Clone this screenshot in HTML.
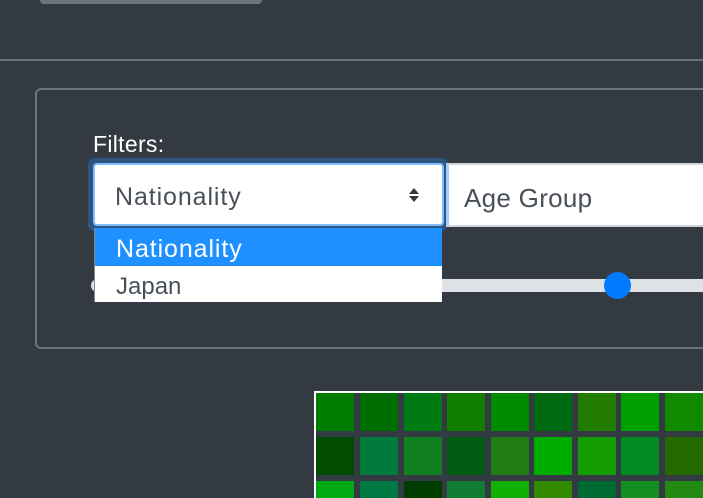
<!DOCTYPE html>
<html><head><style>
*{margin:0;padding:0;box-sizing:border-box}
html,body{width:703px;height:498px;overflow:hidden}
body{background:#343a41;position:relative;font-family:"Liberation Sans","DejaVu Sans",sans-serif}
.a{position:absolute}
.c{position:absolute;width:38px;height:38px}
</style></head><body>
<div class="a" style="left:40px;top:-6px;width:222px;height:10px;background:#6c757d;border-radius:4px"></div>
<div class="a" style="left:0;top:59px;width:703px;height:2px;background:#6e747b"></div>
<div class="a" style="left:35px;top:88px;width:700px;height:261px;border:2px solid #6e747b;border-radius:6px"></div>
<div class="a" style="left:93px;top:131px;color:#fff;font-size:23px;letter-spacing:0.3px">Filters:</div>
<div class="a" style="left:88px;top:158px;width:360px;height:73px;background:#2d5580;border-radius:6px"></div>
<div class="a" style="left:93px;top:163px;width:351px;height:63px;background:#fff;border:2px solid #80bdff;border-radius:4px"></div>
<div class="a" style="left:115px;top:183px;color:#495057;font-size:25px;letter-spacing:0.9px">Nationality</div>
<svg class="a" style="left:408px;top:187px" width="12" height="16" viewBox="0 0 12 16"><path d="M1 7 L6 1 L11 7Z M1 9 L6 15 L11 9Z" fill="#343a40"/></svg>
<div class="a" style="left:446px;top:163px;width:270px;height:64px;background:#fff;border:2px solid #ced4da;border-left:3px solid #a8cef7"></div>
<div class="a" style="left:464px;top:183px;color:#495057;font-size:26px;letter-spacing:0.3px">Age Group</div>
<div class="a" style="left:91px;top:279px;width:620px;height:13px;background:#dee2e6;border-radius:7px"></div>
<div class="a" style="left:604px;top:272px;width:27px;height:27px;background:#007bff;border-radius:50%"></div>
<div class="a" style="left:94px;top:228px;width:348px;height:74px;background:#fff;border-left:1px solid #888"></div>
<div class="a" style="left:95px;top:228px;width:347px;height:38px;background:#1e90ff"></div>
<div class="a" style="left:116px;top:235px;color:#fff;font-size:25px;letter-spacing:0.9px">Nationality</div>
<div class="a" style="left:116px;top:273px;color:#495057;font-size:24px">Japan</div>
<div class="a" style="left:314px;top:391px;width:389px;height:107px;background:#343a41;border-left:2px solid #fff;border-top:2px solid #fff"></div>
<div class="c" style="left:316px;top:393px;background:#007c00"></div>
<div class="c" style="left:360px;top:393px;background:#006d00"></div>
<div class="c" style="left:404px;top:393px;background:#007a12"></div>
<div class="c" style="left:447px;top:393px;background:#117e00"></div>
<div class="c" style="left:491px;top:393px;background:#008a00"></div>
<div class="c" style="left:534px;top:393px;background:#006a12"></div>
<div class="c" style="left:578px;top:393px;background:#227c00"></div>
<div class="c" style="left:621px;top:393px;background:#00a000"></div>
<div class="c" style="left:665px;top:393px;background:#118a00"></div>
<div class="c" style="left:316px;top:437px;background:#004c00"></div>
<div class="c" style="left:360px;top:437px;background:#007a3a"></div>
<div class="c" style="left:404px;top:437px;background:#127e22"></div>
<div class="c" style="left:447px;top:437px;background:#005a12"></div>
<div class="c" style="left:491px;top:437px;background:#227e12"></div>
<div class="c" style="left:534px;top:437px;background:#00ac00"></div>
<div class="c" style="left:578px;top:437px;background:#129c00"></div>
<div class="c" style="left:621px;top:437px;background:#008a22"></div>
<div class="c" style="left:665px;top:437px;background:#226a00"></div>
<div class="c" style="left:316px;top:481px;background:#00aa12"></div>
<div class="c" style="left:360px;top:481px;background:#007a44"></div>
<div class="c" style="left:404px;top:481px;background:#003c00"></div>
<div class="c" style="left:447px;top:481px;background:#127c33"></div>
<div class="c" style="left:491px;top:481px;background:#12b000"></div>
<div class="c" style="left:534px;top:481px;background:#338a00"></div>
<div class="c" style="left:578px;top:481px;background:#006a33"></div>
<div class="c" style="left:621px;top:481px;background:#128e22"></div>
<div class="c" style="left:665px;top:481px;background:#228a12"></div>
</body></html>
